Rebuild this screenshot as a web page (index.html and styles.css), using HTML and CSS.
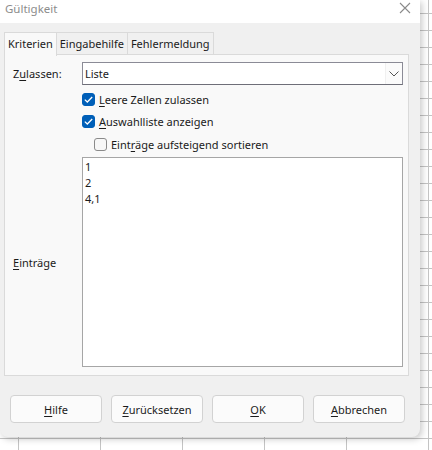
FILE: index.html
```html
<!DOCTYPE html>
<html lang="de">
<head>
    <meta charset="UTF-8">
    <title>Gültigkeit</title>
    <link rel="stylesheet" href="styles.css">
</head>
<body>

    <div class="dialog">
        <div class="titlebar">
            <span class="title">Gültigkeit</span>
            <svg class="close" width="12" height="12" viewBox="0 0 12 12">
                <path d="M1 1 L11 11 M11 1 L1 11" stroke="#8a8a8a" stroke-width="1.1" fill="none"/>
            </svg>
        </div>

        <div class="tabs">
            <div class="tab active">Kriterien</div>
            <div class="tab">Eingabehilfe</div>
            <div class="tab">Fehlermeldung</div>
        </div>

        <div class="panel">
            <div class="row">
                <span class="label">Z<u>u</u>lassen:</span>
                <div class="select">
                    <span>Liste</span>
                    <div class="drop">
                        <svg width="10" height="6" viewBox="0 0 10 6">
                            <path d="M0.5 0.5 L5 5 L9.5 0.5" stroke="#555" stroke-width="1" fill="none"/>
                        </svg>
                    </div>
                </div>
            </div>

            <div class="check-row first">
                <span class="box checked">
                    <svg width="9" height="7" viewBox="0 0 9 7"><path d="M0.8 3.6 L3.3 6 L8.2 1" stroke="#fff" stroke-width="1.3" fill="none"/></svg>
                </span>
                <span><u>L</u>eere Zellen zulassen</span>
            </div>
            <div class="check-row">
                <span class="box checked">
                    <svg width="9" height="7" viewBox="0 0 9 7"><path d="M0.8 3.6 L3.3 6 L8.2 1" stroke="#fff" stroke-width="1.3" fill="none"/></svg>
                </span>
                <span><u>A</u>uswahlliste anzeigen</span>
            </div>
            <div class="check-row sub">
                <span class="box"></span>
                <span>Eint<u>r</u>äge aufsteigend sortieren</span>
            </div>

            <div class="row entries">
                <span class="label"><u>E</u>inträge</span>
                <div class="list">
                    <div>1</div>
                    <div>2</div>
                    <div>4,1</div>
                </div>
            </div>
        </div>

        <div class="buttons">
            <div class="btn"><u>H</u>ilfe</div>
            <div class="btn"><u>Z</u>urücksetzen</div>
            <div class="btn"><u>O</u>K</div>
            <div class="btn"><u>A</u>bbrechen</div>
        </div>
    </div>

</body>
</html>
```

FILE: styles.css
```css
body {
    margin: 0;
    width: 432px;
    height: 450px;
    overflow: hidden;
    font-family: "Noto Sans", "Open Sans", sans-serif;
    font-size: 11px;
    color: #1b1b1b;
    background-color: #fff;
    background-image:
        linear-gradient(to right, #c4c4c4 1px, transparent 1px),
        linear-gradient(to bottom, #c4c4c4 1px, transparent 1px);
    background-size: 82px 17px;
    background-position: 18px 13px;
}
u {
    text-decoration-thickness: 1px;
    text-underline-offset: 2px;
}
.dialog {
    width: 420px;
    height: 437px;
    background: #f0f0f0;
    border-radius: 0 0 8px 8px;
    box-shadow: 2px 2px 7px rgba(0, 0, 0, 0.22);
    display: flex;
    flex-direction: column;
}
.titlebar {
    height: 23px;
    background: #fff;
    display: flex;
    align-items: center;
    justify-content: space-between;
    padding: 0 9px 0 5px;
}
.title {
    color: #8c8c8c;
    font-size: 11.5px;
    margin-top: -6px;
}
.close {
    margin-top: -8px;
}
.tabs {
    display: flex;
    margin: 9px 0 0 4px;
    height: 23px;
}
.tab {
    padding: 0 3px;
    line-height: 22px;
    border: 1px solid #dadada;
    border-bottom: none;
    border-left: none;
    background: #f0f0f0;
}
.tab.active {
    background: #f9f9f9;
    border-left: 1px solid #dadada;
    position: relative;
    z-index: 1;
    height: 23px;
}
.panel {
    margin: -1px 11px 0 4px;
    height: 322px;
    background: #f9f9f9;
    border: 1px solid #dadada;
    padding: 7px 5px 0 8px;
    box-sizing: border-box;
}
.row {
    display: flex;
    align-items: center;
}
.label {
    width: 69px;
}
.select {
    flex: 1;
    height: 23px;
    box-sizing: border-box;
    border: 1px solid #8b8b96;
    border-bottom-color: #6e6e78;
    background: #fff;
    display: flex;
    align-items: center;
    justify-content: space-between;
    padding-left: 2px;
}
.drop {
    width: 16px;
    height: 21px;
    background: #fbfbfb;
    border-left: 1px solid #f0f0f0;
    display: flex;
    align-items: center;
    justify-content: center;
}
.check-row {
    display: flex;
    align-items: center;
    height: 22px;
    margin-left: 69px;
}
.check-row.first {
    margin-top: 3px;
}
.check-row.sub {
    margin-left: 81px;
    margin-top: 1px;
}
.box {
    width: 13px;
    height: 13px;
    box-sizing: border-box;
    border: 1px solid #8a8a8a;
    border-radius: 3px;
    background: #f7f7f7;
    margin-right: 4px;
    display: flex;
    align-items: center;
    justify-content: center;
}
.box.checked {
    background: #005fb8;
    border-color: #005fb8;
}
.entries {
    margin-top: 2px;
}
.list {
    flex: 1;
    height: 210px;
    box-sizing: border-box;
    border: 1px solid #a6a6a6;
    background: #fff;
    padding: 1px 2px;
    line-height: 16px;
}
.buttons {
    display: flex;
    gap: 9px;
    padding: 19px 0 0 10px;
}
.btn {
    width: 92px;
    height: 28px;
    box-sizing: border-box;
    border: 1px solid #d2d2d2;
    border-radius: 4px;
    background: #fbfbfb;
    display: flex;
    align-items: center;
    justify-content: center;
}
```
